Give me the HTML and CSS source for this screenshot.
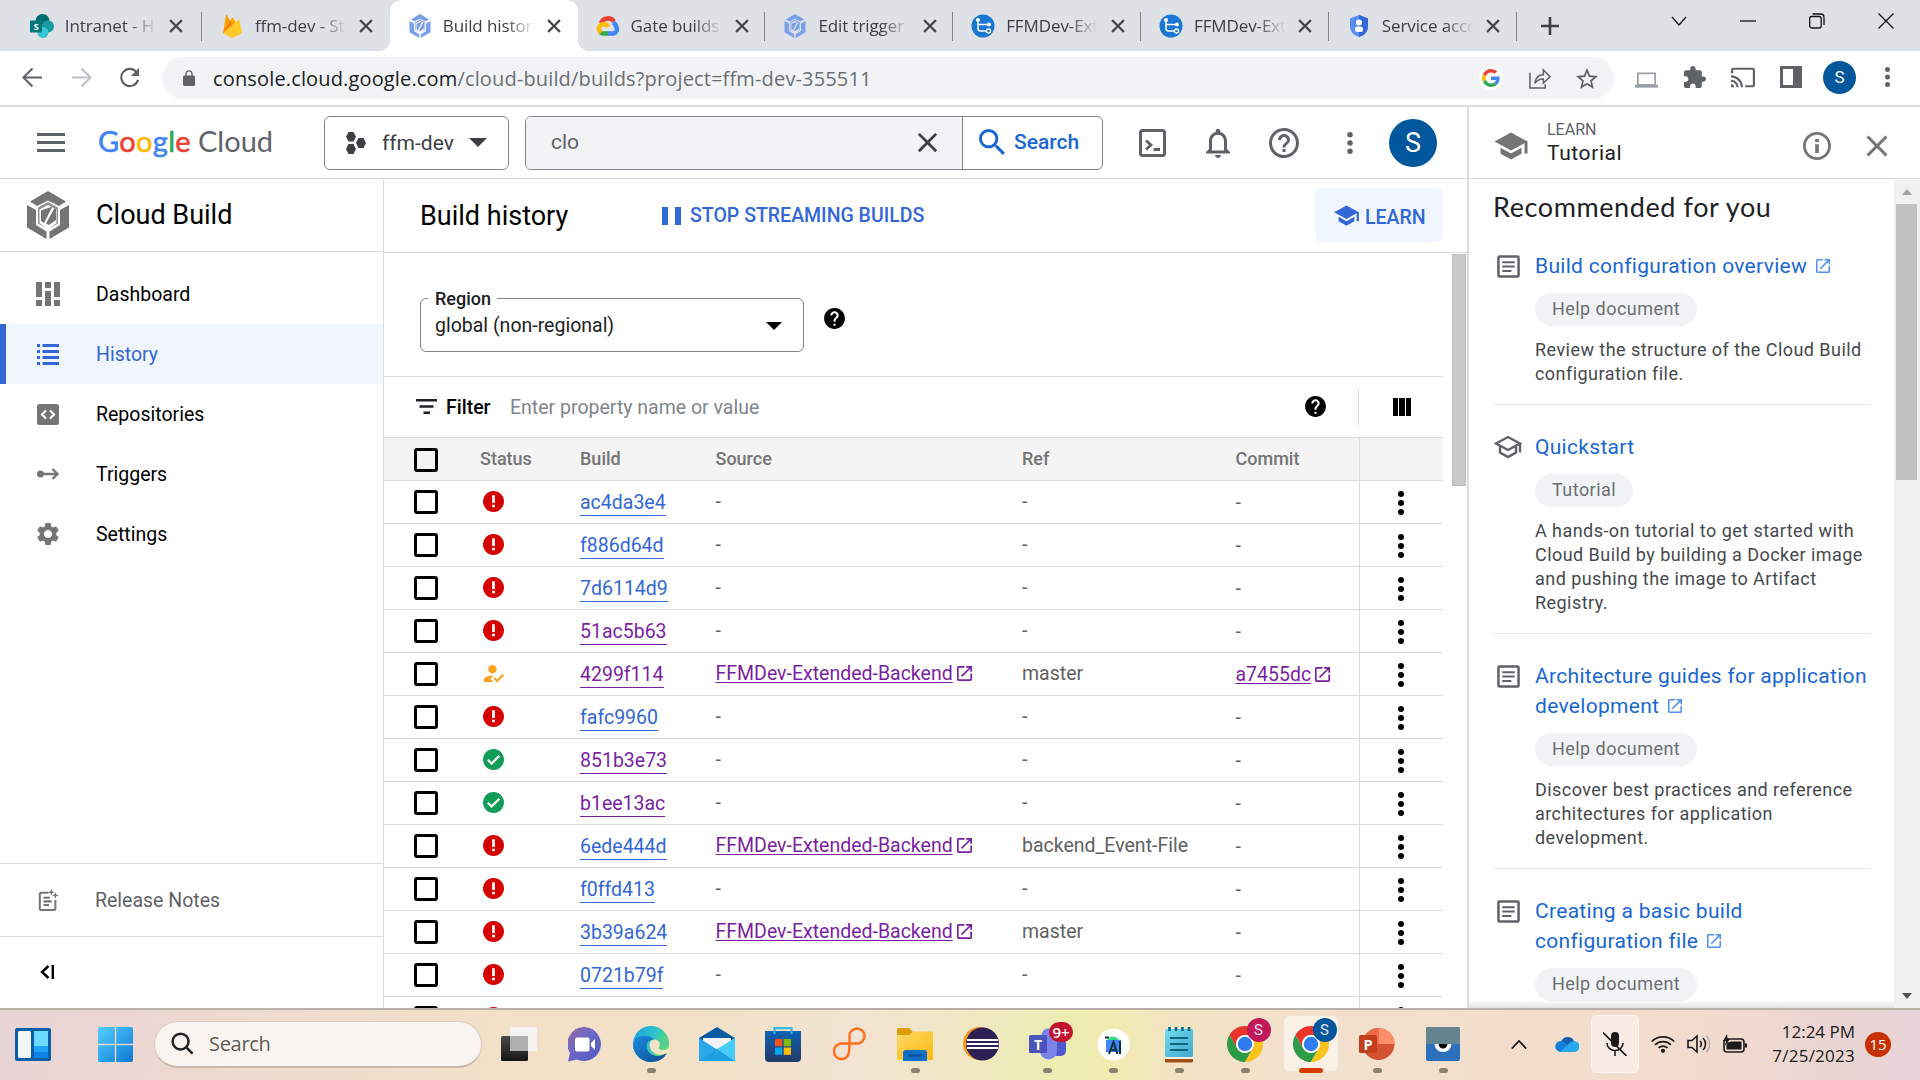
FILE: index.html
```html
<!DOCTYPE html>
<html lang="en">
<head>
<meta charset="utf-8">
<title>Build history – Cloud Build</title>
<link rel="stylesheet" href="styles.css">
</head>
<body>
<svg class="defs" width="0" height="0">
  <defs>
    <linearGradient id="edgeTop" x1="0" y1="0" x2="1" y2=".6"><stop offset="0" stop-color="#1b9de2"/><stop offset=".55" stop-color="#2fc4cf"/><stop offset="1" stop-color="#6be04e"/></linearGradient>
    <linearGradient id="edgeLow" x1="0" y1="0" x2="1" y2="1"><stop offset="0" stop-color="#1b8fe0"/><stop offset="1" stop-color="#0c4a94"/></linearGradient>
    <linearGradient id="win" x1="0" y1="0" x2="1" y2="1"><stop offset="0" stop-color="#55d0ff"/><stop offset="1" stop-color="#0a78d4"/></linearGradient>
    <linearGradient id="chat" x1="0" y1="0" x2="1" y2="1"><stop offset="0" stop-color="#9a6a9c"/><stop offset=".4" stop-color="#6f68c4"/><stop offset="1" stop-color="#5058c8"/></linearGradient>
    <linearGradient id="folder" x1="0" y1="0" x2="1" y2="1"><stop offset="0" stop-color="#ffd968"/><stop offset="1" stop-color="#fbb80f"/></linearGradient>
    <linearGradient id="store" x1="0" y1="0" x2="0" y2="1"><stop offset="0" stop-color="#0d62b5"/><stop offset="1" stop-color="#243a66"/></linearGradient>
    <linearGradient id="note" x1="0" y1="0" x2="1" y2="1"><stop offset="0" stop-color="#70daf2"/><stop offset="1" stop-color="#40a9cc"/></linearGradient>
    <linearGradient id="grey" x1="0" y1="0" x2="0" y2="1"><stop offset="0" stop-color="#4a4a4a"/><stop offset="1" stop-color="#161616"/></linearGradient>
  </defs>
  <symbol id="close" viewBox="0 0 24 24"><path d="M19 6.41L17.59 5 12 10.59 6.41 5 5 6.41 10.59 12 5 17.59 6.41 19 12 13.41 17.59 19 19 17.59 13.41 12z"/></symbol>
  <symbol id="help" viewBox="0 0 24 24"><path d="M12 2C6.48 2 2 6.48 2 12s4.48 10 10 10 10-4.48 10-10S17.52 2 12 2zm1 17h-2v-2h2v2zm2.07-7.75l-.9.92C13.45 12.9 13 13.5 13 15h-2v-.5c0-1.1.45-2.1 1.17-2.83l1.24-1.26c.37-.36.59-.86.59-1.41 0-1.1-.9-2-2-2s-2 .9-2 2H8c0-2.21 1.79-4 4-4s4 1.79 4 4c0 .88-.36 1.68-.93 2.25z"/></symbol>
  <symbol id="help-o" viewBox="0 0 24 24"><path d="M11 18h2v-2h-2v2zm1-16C6.48 2 2 6.48 2 12s4.48 10 10 10 10-4.48 10-10S17.52 2 12 2zm0 18c-4.41 0-8-3.59-8-8s3.59-8 8-8 8 3.59 8 8-3.59 8-8 8zm0-14c-2.21 0-4 1.79-4 4h2c0-1.1.9-2 2-2s2 .9 2 2c0 2-3 1.75-3 5h2c0-2.25 3-2.5 3-5 0-2.21-1.79-4-4-4z"/></symbol>
  <symbol id="error" viewBox="2 2 20 20"><path fill="#d50000" d="M12 2C6.48 2 2 6.48 2 12s4.48 10 10 10 10-4.48 10-10S17.52 2 12 2z"/><path fill="#fff" d="M10.7 6h2.6v7.4h-2.6zM10.7 15h2.6v2.4h-2.6z"/></symbol>
  <symbol id="ok" viewBox="2 2 20 20"><path fill="#0f9d58" d="M12 2C6.48 2 2 6.48 2 12s4.48 10 10 10 10-4.48 10-10S17.52 2 12 2z"/><path fill="none" stroke="#fff" stroke-width="2.2" d="M6.6 12.2l3.6 3.6 7.4-7.4"/></symbol>
  <symbol id="person" viewBox="2 2 20 20"><path fill="#f9a11b" d="M9 17l3-2.94c-.39-.04-.68-.06-1-.06-2.67 0-8 1.34-8 4v2h9l-3-3zm2-5c2.21 0 4-1.79 4-4s-1.79-4-4-4-4 1.790-4 4 1.790 4 4 4zm4.470 8.500L12 17l1.400-1.410 2.070 2.080 5.130-5.170 1.400 1.410z"/></symbol>
  <symbol id="launch" viewBox="3 3 18 18"><path d="M19 19H5V5h7V3H5c-1.110 0-2 .9-2 2v14c0 1.100.89 2 2 2h14c1.100 0 2-.9 2-2v-7h-2v7zM14 3v2h3.590l-9.830 9.830 1.410 1.410L19 6.410V10h2V3h-7z"/></symbol>
  <symbol id="school" viewBox="0 0 24 24"><path d="M5 13.180v4L12 21l7-3.820v-4L12 17l-7-3.820zM12 3L1 9l11 6 9-4.910V17h2V9L12 3z"/></symbol>
  <symbol id="dots" viewBox="0 0 6 24"><circle cx="3" cy="3" r="3"/><circle cx="3" cy="12" r="3"/><circle cx="3" cy="21" r="3"/></symbol>
  <symbol id="search" viewBox="3 3 17.500 17.500"><path d="M15.500 14h-.79l-.28-.27A6.471 6.471 0 0016 9.500 6.500 6.500 0 109.500 16c1.610 0 3.090-.59 4.230-1.570l.27.28v.79l5 4.990L20.490 19l-4.990-5zm-6 0C7.010 14 5 11.990 5 9.500S7.010 5 9.500 5 14 7.010 14 9.500 11.990 14 9.500 14z"/></symbol>
  <symbol id="article" viewBox="0 0 24 24"><rect x="1.500" y="1.500" width="21" height="21" rx="1" fill="none" stroke="#5f6368" stroke-width="2.600"/><path stroke="#5f6368" stroke-width="2" d="M5.500 7.500h13M5.500 12h13M5.500 16.700h9.500"/></symbol>
  <symbol id="cube" viewBox="0 0 42 48"><path d="M21 0l18 10.500-7 4.500-11-5.500L10 15l-7-4.500zM0 14l9 5v15l10.500 6.500V48L0 36.500zM42 14l-9 5v15l-10.500 6.500V48L42 36.500z"/><path opacity=".8" d="M21 11l10 5.500v16L22.500 37v-0l7-5V18.500L21 14l-8.500 4.500V32l7 5L11 32.500v-16z"/><path d="M14 19.500l11.500-4L17 32l-3-2zM27.500 17l1.500 1v11l-7 5-3-1.500z" class="cube-core"/></symbol>
  <symbol id="pipe" viewBox="0 0 24 24"><circle cx="12" cy="12" r="11.500" fill="#1976d2"/><path d="M7 5.500v9q0 2.500 2.500 2.500H17M7 10.500h10" fill="none" stroke="#fff" stroke-width="1.500"/><g fill="#fff"><circle cx="7" cy="6" r="2"/><circle cx="18" cy="10.500" r="2"/></g><circle cx="17.500" cy="17" r="2" fill="#1976d2" stroke="#fff" stroke-width="1.300"/></symbol>
  <symbol id="chrome" viewBox="2 2 44 44"><path fill="#e8342b" d="M24 13H43.050A22 22 0 0 0 4.950 13L14.500 29.500A11 11 0 0 1 24 13z"/><path fill="#2c9c48" d="M14.500 29.500L4.950 13A22 22 0 0 0 24 46L33.500 29.500A11 11 0 0 1 14.500 29.500z"/><path fill="#fcc31d" d="M33.500 29.500L24 46A22 22 0 0 0 43.050 13H24A11 11 0 0 1 33.500 29.500z"/><circle cx="24" cy="24" r="11" fill="#fff"/><circle cx="24" cy="24" r="8.800" fill="#2f7cf0"/></symbol>
</svg>

<div class="tabs">
  <div class="tab"><svg class="fav" viewBox="0 0 24 24"><circle cx="12.500" cy="7" r="7" fill="#036c70"/><circle cx="18" cy="12.500" r="6" fill="#1a9ba1"/><circle cx="13" cy="18.500" r="5.500" fill="#37c6d0"/><rect y="6.500" width="12" height="12" rx="1" fill="#03787c"/><text x="6" y="16" font-size="9.500" font-weight="700" text-anchor="middle" fill="#fff">S</text></svg><span class="tab-title">Intranet - H</span><svg class="tab-x"><use href="#close"/></svg></div>
  <div class="tab"><svg class="fav" viewBox="0 0 24 24"><path fill="#ffa000" d="M3 19L6 1q.5-1 1 0l3 6 2-3q.6-.7 1.200 0L21 19z"/><path fill="#f57c00" d="M3 19l7-12 3 5z"/><path fill="#ffca28" d="M3 19L18.500 5.500q.8-.5 1 .5L22 19l-8.500 4.700q-1 .4-2 0z"/></svg><span class="tab-title">ffm-dev - St</span><svg class="tab-x"><use href="#close"/></svg></div>
  <div class="tab active"><svg class="fav cube-blue"><use href="#cube"/></svg><span class="tab-title">Build history</span><svg class="tab-x"><use href="#close"/></svg></div>
  <div class="tab"><svg class="fav" viewBox="0 0 24 24"><g fill="none" stroke-width="4.500"><path stroke="#ea4335" d="M5 9A7.500 7.500 0 0 1 18 7.500"/><path stroke="#4285f4" d="M17 8.500c2 1 3 2 3.300 4.500a4.300 4.300 0 0 1-3 6.500H12"/><path stroke="#34a853" d="M12 19.500H7c-1 0-2-.3-3-1"/><path stroke="#fbbc05" d="M5 18.500a4.500 4.500 0 0 1 4-8c1.500.3 2.500 1 3 2.500"/></g></svg><span class="tab-title">Gate builds</span><svg class="tab-x"><use href="#close"/></svg></div>
  <div class="tab"><svg class="fav cube-blue"><use href="#cube"/></svg><span class="tab-title">Edit trigger</span><svg class="tab-x"><use href="#close"/></svg></div>
  <div class="tab"><svg class="fav"><use href="#pipe"/></svg><span class="tab-title">FFMDev-Ext</span><svg class="tab-x"><use href="#close"/></svg></div>
  <div class="tab"><svg class="fav"><use href="#pipe"/></svg><span class="tab-title">FFMDev-Ext</span><svg class="tab-x"><use href="#close"/></svg></div>
  <div class="tab"><svg class="fav" viewBox="0 0 24 24"><path fill="#5b8def" d="M12 1l9 3.500V12c0 6-4 9.500-9 11-5-1.500-9-5-9-11V4.500z"/><path fill="#3367d6" d="M12 1l9 3.500V12c0 6-4 9.500-9 11z"/><circle cx="12" cy="8.500" r="3" fill="#fff"/><rect x="8" y="12.500" width="8" height="5.500" rx="2.500" fill="#fff"/></svg><span class="tab-title">Service acco</span><svg class="tab-x"><use href="#close"/></svg></div>
  <svg class="tab-new" viewBox="0 0 18 18"><path stroke="#3c4043" stroke-width="2.600" d="M9 0v18M0 9h18"/></svg>
  <div class="win-controls">
    <svg viewBox="0 0 16 16"><path d="M1 4l7 8 7-8"/></svg>
    <svg viewBox="0 0 16 16"><path d="M0 8h16"/></svg>
    <svg viewBox="0 0 16 16"><rect x=".7" y="3.500" width="11.500" height="11.500" rx="2"/><path d="M3.500 1h8q3.500 0 3.500 3.500v7.500"/></svg>
    <svg viewBox="0 0 16 16"><path d="M.5.5l15 15M15.500.5l-15 15"/></svg>
  </div>
</div>

<div class="toolbar">
  <svg class="tb-back" viewBox="0 0 22 22"><path d="M21 11H2M11 1.500L1.500 11l9.500 9.500"/></svg>
  <svg class="tb-fwd" viewBox="0 0 22 22"><path d="M1 11h19M11 1.500l9.500 9.500-9.500 9.500"/></svg>
  <svg class="tb-reload" viewBox="0 0 22 22"><path d="M18.500 5.500A9 9 0 1 0 20 13.500" /><path class="tip" d="M21 1v8.500h-8.500z"/></svg>
  <div class="omnibox">
    <svg class="lock" viewBox="4 1 16 21"><path d="M18 8h-1V6c0-2.760-2.240-5-5-5S7 3.240 7 6v2H6c-1.100 0-2 .9-2 2v10c0 1.100.9 2 2 2h12c1.100 0 2-.9 2-2V10c0-1.100-.9-2-2-2zm-2.900 0H8.900V6c0-1.710 1.390-3.100 3.100-3.100s3.100 1.390 3.100 3.100v2z"/></svg>
    <div class="url"><b>console.cloud.google.com</b>/cloud-build/builds?project=ffm-dev-355511</div>
    <div class="g-badge"><svg width="18" height="18" viewBox="0 0 48 48"><path fill="#EA4335" d="M24 9.500c3.540 0 6.710 1.220 9.210 3.600l6.850-6.850C35.900 2.380 30.470 0 24 0 14.620 0 6.510 5.380 2.560 13.220l7.980 6.190C12.430 13.720 17.740 9.500 24 9.500z"/><path fill="#4285F4" d="M46.980 24.550c0-1.570-.15-3.090-.38-4.550H24v9.020h12.940c-.58 2.960-2.260 5.480-4.780 7.180l7.730 6c4.510-4.180 7.090-10.360 7.090-17.650z"/><path fill="#FBBC05" d="M10.530 28.590c-.48-1.450-.76-2.990-.76-4.590s.27-3.140.76-4.590l-7.980-6.190C.92 16.460 0 20.120 0 24c0 3.880.92 7.540 2.560 10.780l7.970-6.190z"/><path fill="#34A853" d="M24 48c6.480 0 11.930-2.130 15.890-5.810l-7.730-6c-2.150 1.450-4.920 2.300-8.160 2.300-6.260 0-11.570-4.220-13.470-9.910l-7.980 6.190C6.510 42.620 14.620 48 24 48z"/></svg></div>
    <svg class="share" viewBox="0 0 23 22"><path d="M1 5v16h16v-4M6 16c1-6 4-9 9-9V2l7 7-7 7v-4.500c-4 0-6.500 1-9 4.500z"/></svg>
    <svg class="star" viewBox="2 2 20 19"><path d="M22 9.240l-7.190-.62L12 2 9.190 8.630 2 9.240l5.460 4.730L5.820 21 12 17.270 18.180 21l-1.630-7.030L22 9.240zM12 15.400l-3.760 2.270 1-4.280-3.320-2.880 4.380-.38L12 6.100l1.710 4.040 4.380.38-3.320 2.880 1 4.280L12 15.400z"/></svg>
  </div>
  <svg class="tb-laptop" viewBox="0 0 24 16"><path fill="none" stroke="#9aa0a6" stroke-width="1.800" d="M3 1h18v12H3z"/><path fill="#9aa0a6" d="M0 13h24v3H0z"/></svg>
  <svg class="tb-puzzle" viewBox="2 1 21 21"><path fill="#5f6368" d="M20.500 11H19V7c0-1.100-.9-2-2-2h-4V3.500C13 2.120 11.880 1 10.500 1S8 2.120 8 3.500V5H4c-1.100 0-1.990.9-1.990 2v3.800H3.500c1.490 0 2.700 1.210 2.700 2.700s-1.210 2.700-2.700 2.700H2V20c0 1.100.9 2 2 2h3.800v-1.500c0-1.490 1.210-2.700 2.700-2.700 1.490 0 2.700 1.210 2.700 2.700V22H17c1.100 0 2-.9 2-2v-4h1.500c1.380 0 2.500-1.120 2.500-2.500S21.880 11 20.500 11z"/></svg>
  <svg class="tb-cast" viewBox="1 3 22 18"><path fill="#5f6368" d="M21 3H3c-1.100 0-2 .9-2 2v3h2V5h18v14h-7v2h7c1.100 0 2-.9 2-2V5c0-1.100-.9-2-2-2zM1 18v3h3c0-1.660-1.340-3-3-3zm0-4v2c2.760 0 5 2.240 5 5h2c0-3.870-3.130-7-7-7zm0-4v2c4.970 0 9 4.030 9 9h2c0-6.080-4.930-11-11-11z"/></svg>
  <svg class="tb-panel" viewBox="0 0 22 22"><path fill="#5f6368" fill-rule="evenodd" d="M0 0h22v22H0zM3 3v16h10V3z"/></svg>
  <div class="tb-avatar">S</div>
  <svg class="tb-more"><use href="#dots"/></svg>
</div>

<div class="page">
  <div class="console">
    <div class="topbar">
      <svg class="menu" viewBox="0 0 28 19"><path stroke="#5f6368" stroke-width="3" d="M0 1.500h28M0 9.500h28M0 17.500h28"/></svg>
      <div class="logo"><span class="goog"><i class="b">G</i><i class="r">o</i><i class="y">o</i><i class="b">g</i><i class="g">l</i><i class="r">e</i></span><span class="cloud">Cloud</span></div>
      <div class="project">
        <svg class="hexes" viewBox="0 0 20 22"><path d="M2.500 0h5L10 4.700 7.500 9.500h-5L0 4.700zM2.500 12h5l2.500 5-2.500 5h-5L0 17zM12.500 6h5l2.500 5-2.500 5h-5L10 11z"/></svg>
        <span>ffm-dev</span><i class="caret big"></i>
      </div>
      <div class="searchbox"><div class="query"><span>clo</span><svg><use href="#close"/></svg></div><div class="go"><svg><use href="#search"/></svg>Search</div></div>
      <svg class="ic-shell" viewBox="0 0 27 28"><rect x="1.500" y="1.500" width="24" height="25" rx="2" fill="none" stroke="#5f6368" stroke-width="3"/><path fill="none" stroke="#5f6368" stroke-width="2.800" d="M7 11.500l5 4.500-5 4.500M14.500 20.500h6.500"/></svg>
      <svg class="ic-bell" viewBox="0 0 24 24"><path d="M12 22c1.100 0 2-.9 2-2h-4c0 1.100.9 2 2 2zm6-6v-5c0-3.070-1.630-5.640-4.500-6.320V4c0-.83-.67-1.500-1.500-1.500s-1.500.67-1.500 1.500v.68C7.640 5.360 6 7.920 6 11v5l-2 2v1h16v-1l-2-2zm-2 1H8v-6c0-2.480 1.510-4.500 4-4.500s4 2.020 4 4.500v6z"/></svg>
      <svg class="ic-help"><use href="#help-o"/></svg>
      <svg class="ic-more"><use href="#dots"/></svg>
      <div class="avatar">S</div>
    </div>
    <div class="body">
      <nav class="nav">
        <div class="nav-head"><svg class="cube-grey"><use href="#cube"/></svg>Cloud Build</div>
        <div class="nav-items">
          <div class="nav-item"><svg viewBox="0 0 24 24"><path d="M0 0h6v15H0zM0 18h6v6H0zM9 0h6v6H9zM9 9h6v15H9zM18 0h6v15h-6zM18 18h6v6h-6z"/></svg>Dashboard</div>
          <div class="nav-item selected"><svg viewBox="0 0 24 24"><path d="M1 2h3v3H1zM6.500 2H23v3H6.500zM1 8h3v3H1zM6.500 8H23v3H6.500zM1 14h3v3H1zM6.500 14H23v3H6.500zM1 20h3v3H1zM6.500 20H23v3H6.500z"/></svg>History</div>
          <div class="nav-item"><svg viewBox="0 0 24 24"><rect x="1" y="2" width="22" height="21" rx="2.500"/><path fill="none" stroke="#fff" stroke-width="2.200" d="M10 8.500L6 12.500l4 4M14 8.500l4 4-4 4"/></svg>Repositories</div>
          <div class="nav-item"><svg viewBox="0 0 24 24"><circle cx="4.500" cy="12" r="3.500"/><path fill="none" stroke="#757575" stroke-width="2.400" d="M5 12h16M16.500 7l5 5-5 5"/></svg>Triggers</div>
          <div class="nav-item"><svg viewBox="1.500 1.500 21 21"><path d="M19.140 12.940c.04-.3.06-.61.06-.94 0-.32-.02-.64-.07-.94l2.030-1.580c.18-.14.23-.41.12-.61l-1.920-3.320c-.12-.22-.37-.29-.59-.22l-2.390.96c-.5-.38-1.030-.7-1.620-.94l-.36-2.540c-.04-.24-.24-.41-.48-.41h-3.840c-.24 0-.43.17-.47.41l-.36 2.540c-.59.24-1.130.57-1.620.94l-2.390-.96c-.22-.08-.47 0-.59.22L2.740 8.870c-.12.21-.08.47.12.61l2.030 1.580c-.05.3-.09.63-.09.94s.02.64.07.94l-2.030 1.580c-.18.14-.23.41-.12.61l1.920 3.320c.12.22.37.29.59.22l2.390-.96c.5.38 1.030.7 1.620.94l.36 2.540c.05.24.24.41.48.41h3.840c.24 0 .44-.17.47-.41l.36-2.540c.59-.24 1.130-.56 1.620-.94l2.390.96c.22.08.47 0 .59-.22l1.920-3.320c.12-.22.07-.47-.12-.61l-2.010-1.580zM12 15.600c-1.980 0-3.600-1.620-3.600-3.600s1.620-3.600 3.600-3.600 3.600 1.620 3.600 3.600-1.620 3.600-3.600 3.600z"/></svg>Settings</div>
        </div>
        <div class="notes"><svg viewBox="0 0 22 24"><path fill="none" stroke="#757575" stroke-width="2.200" d="M11 4H3q-1.500 0-1.500 1.500v16Q1.500 23 3 23h14q1.500 0 1.500-1.500V12M5.500 9.500h7M5.500 13.500h9M5.500 17.500h6"/><path fill="#757575" d="M14 0l1 2.500 2.500 1L15 4.500 14 7l-1-2.500-2.500-1 2.500-1zM18.500 3.500l1 2.500 2.500 1-2.500 1-1 2.500-1-2.500-2.500-1 2.500-1z"/></svg>Release Notes</div>
        <div class="collapse"><svg viewBox="0 0 14 14"><path fill="none" stroke="#000" stroke-width="2.400" d="M8.500 1L2 7l6.500 6M12.800 0v14"/></svg></div>
      </nav>
      <main class="main">
        <div class="main-head">
          <h1>Build history</h1>
          <div class="pause"></div><span class="stream">STOP STREAMING BUILDS</span>
          <div class="learn"><svg><use href="#school"/></svg>LEARN</div>
        </div>
        <div class="main-scroll">
          <div class="content">
            <div class="region-row">
              <fieldset class="region"><legend>Region</legend><span>global (non-regional)</span><i class="caret"></i></fieldset>
              <svg class="q"><use href="#help"/></svg>
            </div>
            <div class="filter-row">
              <svg class="funnel" viewBox="0 0 21 15"><path stroke="#202124" stroke-width="2.600" d="M0 1.300h21M3.500 7.500h14M7.500 13.700h6.500"/></svg>
              <b>Filter</b><span>Enter property name or value</span>
              <svg class="q"><use href="#help"/></svg>
              <div class="cols"><svg viewBox="0 0 18 18"><path d="M0 0h5v18H0zM6 0h6v18H6zM13 0h5v18h-5z"/></svg></div>
            </div>
            <div class="row head"><i class="cb"></i><span>Status</span><span>Build</span><span>Source</span><span>Ref</span><span>Commit</span><span class="act"></span></div>
            <div class="row"><i class="cb"></i><svg class="st"><use href="#error"/></svg><a class="id">ac4da3e4</a><span>-</span><span>-</span><span class="c">-</span><span class="act"><svg><use href="#dots"/></svg></span></div>
            <div class="row"><i class="cb"></i><svg class="st"><use href="#error"/></svg><a class="id">f886d64d</a><span>-</span><span>-</span><span class="c">-</span><span class="act"><svg><use href="#dots"/></svg></span></div>
            <div class="row"><i class="cb"></i><svg class="st"><use href="#error"/></svg><a class="id">7d6114d9</a><span>-</span><span>-</span><span class="c">-</span><span class="act"><svg><use href="#dots"/></svg></span></div>
            <div class="row"><i class="cb"></i><svg class="st"><use href="#error"/></svg><a class="id seen">51ac5b63</a><span>-</span><span>-</span><span class="c">-</span><span class="act"><svg><use href="#dots"/></svg></span></div>
            <div class="row"><i class="cb"></i><svg class="st"><use href="#person"/></svg><a class="id seen">4299f114</a><span class="ext"><a>FFMDev-Extended-Backend</a><svg><use href="#launch"/></svg></span><span>master</span><span class="ext c"><a>a7455dc</a><svg><use href="#launch"/></svg></span><span class="act"><svg><use href="#dots"/></svg></span></div>
            <div class="row"><i class="cb"></i><svg class="st"><use href="#error"/></svg><a class="id">fafc9960</a><span>-</span><span>-</span><span class="c">-</span><span class="act"><svg><use href="#dots"/></svg></span></div>
            <div class="row"><i class="cb"></i><svg class="st"><use href="#ok"/></svg><a class="id seen">851b3e73</a><span>-</span><span>-</span><span class="c">-</span><span class="act"><svg><use href="#dots"/></svg></span></div>
            <div class="row"><i class="cb"></i><svg class="st"><use href="#ok"/></svg><a class="id seen">b1ee13ac</a><span>-</span><span>-</span><span class="c">-</span><span class="act"><svg><use href="#dots"/></svg></span></div>
            <div class="row"><i class="cb"></i><svg class="st"><use href="#error"/></svg><a class="id">6ede444d</a><span class="ext"><a>FFMDev-Extended-Backend</a><svg><use href="#launch"/></svg></span><span>backend_Event-File</span><span class="c">-</span><span class="act"><svg><use href="#dots"/></svg></span></div>
            <div class="row"><i class="cb"></i><svg class="st"><use href="#error"/></svg><a class="id">f0ffd413</a><span>-</span><span>-</span><span class="c">-</span><span class="act"><svg><use href="#dots"/></svg></span></div>
            <div class="row"><i class="cb"></i><svg class="st"><use href="#error"/></svg><a class="id">3b39a624</a><span class="ext"><a>FFMDev-Extended-Backend</a><svg><use href="#launch"/></svg></span><span>master</span><span class="c">-</span><span class="act"><svg><use href="#dots"/></svg></span></div>
            <div class="row"><i class="cb"></i><svg class="st"><use href="#error"/></svg><a class="id">0721b79f</a><span>-</span><span>-</span><span class="c">-</span><span class="act"><svg><use href="#dots"/></svg></span></div>
            <div class="row"><i class="cb"></i><svg class="st"><use href="#error"/></svg><span></span><span></span><span></span><span></span><span class="act"><svg><use href="#dots"/></svg></span></div>
          </div>
          <div class="inner-bar"><i></i></div>
        </div>
      </main>
    </div>
  </div>

  <aside class="panel">
    <div class="panel-head">
      <svg class="hat"><use href="#school"/></svg>
      <div class="panel-title"><small>LEARN</small><span>Tutorial</span></div>
      <svg class="info" viewBox="2 2 20 20"><path d="M10.700 7h2.600v2.300h-2.600zm0 3.800h2.600V17h-2.600zM12 2C6.480 2 2 6.480 2 12s4.480 10 10 10 10-4.480 10-10S17.520 2 12 2zm0 18c-4.410 0-8-3.590-8-8s3.590-8 8-8 8 3.590 8 8-3.590 8-8 8z"/></svg>
      <svg class="px"><use href="#close"/></svg>
    </div>
    <div class="panel-body">
      <div class="panel-content">
        <h2>Recommended for you</h2>
        <div class="rec"><svg class="kind"><use href="#article"/></svg><div>
          <div class="rec-title">Build configuration overview <svg><use href="#launch"/></svg></div>
          <span class="chip">Help document</span><p>Review the structure of the Cloud Build<br>configuration file.</p></div></div>
        <div class="rec"><svg class="kind hat2" viewBox="0 0 28 24"><path fill="none" stroke="#5f6368" stroke-width="2.400" d="M2 8.500L14 2l12 6.500-12 6.500zM6 11.500v6l8 4.500 8-4.500v-6M26 8v9.500"/></svg><div>
          <div class="rec-title">Quickstart</div>
          <span class="chip">Tutorial</span><p>A hands-on tutorial to get started with<br>Cloud Build by building a Docker image<br>and pushing the image to Artifact<br>Registry.</p></div></div>
        <div class="rec"><svg class="kind"><use href="#article"/></svg><div>
          <div class="rec-title">Architecture guides for application<br>development <svg><use href="#launch"/></svg></div>
          <span class="chip">Help document</span><p>Discover best practices and reference<br>architectures for application<br>development.</p></div></div>
        <div class="rec"><svg class="kind"><use href="#article"/></svg><div>
          <div class="rec-title">Creating a basic build<br>configuration file <svg><use href="#launch"/></svg></div>
          <span class="chip">Help document</span></div></div>
        <div class="fade"></div>
      </div>
      <div class="panel-bar"><i class="up"></i><i class="thumb"></i><i class="down"></i></div>
    </div>
  </aside>
</div>

<div class="taskbar">
  <svg class="widgets" viewBox="0 0 36 33"><rect width="36" height="33" rx="2" fill="#0a5ea8"/><rect x="3" y="3" width="13" height="27" rx="1.500" fill="#f4f6f8"/><path fill="#6ad9ff" d="M19 3h14v15H19z"/><path fill="#1fa3f5" d="M19 18h14v6H19z"/><path fill="#0a84e8" d="M19 24h14v6H19z"/></svg>
  <svg class="start" viewBox="0 0 35 35"><path fill="url(#win)" d="M2 0h14.800v16.800H0V2q0-2 2-2zM18.200 0H33q2 0 2 2v14.800H18.200zM0 18.200h16.800V35H2q-2 0-2-2zM18.200 18.200H35V33q0 2-2 2H18.200z"/></svg>
  <div class="tsearch"><svg viewBox="0 0 24 24"><circle cx="10" cy="10" r="8.300"/><path d="M16 16l6.500 6.500"/></svg>Search</div>
  <div class="apps">
    <div class="app"><svg width="36" height="36" viewBox="0 0 36 36"><rect y="10" width="27" height="25" rx="1.500" fill="url(#grey)"/><rect x="9" y="1" width="27" height="24" rx="1.500" fill="#f4f4f4" fill-opacity=".93"/><path fill="#b0b0b0" d="M9 10h18v15H10.500Q9 25 9 23.500z"/></svg></div>
    <div class="app"><svg width="34" height="35" viewBox="0 0 34 35"><path fill="url(#chat)" d="M17 0a17 17 0 1 1-8 32.500L0 34.500 2 26A17 17 0 0 1 17 0z"/><rect x="7" y="10.500" width="14.500" height="14" rx="2" fill="#fff"/><path fill="#fff" d="M23 16l4-4v11l-4-4z"/></svg></div>
    <div class="app on"><svg width="36" height="36" viewBox="0 0 36 36"><circle cx="18" cy="18" r="18" fill="url(#edgeTop)"/><path fill="url(#edgeLow)" d="M0 18C1 9 15 7 22 14c-8-2-11 6-6 12s13 4 18 1C31 33 25 36 18 36 8 36 0 28 0 18z"/><path fill="#f2e2c8" d="M18 15c3-3 9-1 9 4-1 2-2 3-1 4 3 2 7 1 10-1-.5 2-1 4-2 5-6 3-13 2-16-3-2-4-2-7 0-9z"/><path fill="#4fd08c" d="M26 22c4 3 9 0 10-4a18 18 0 0 0-2-8l-9 3c3 3 3 6 1 9z"/></svg></div>
    <div class="app"><svg width="36" height="34" viewBox="0 0 36 34"><path fill="#0c59a4" d="M0 11L18 0l18 11v6H0z"/><path fill="#f1f4f8" d="M4 11h28v10H4z"/><path fill="#2aa9ea" d="M0 11l36 23H0z"/><path fill="#44cdf8" d="M36 11v23L18 22z"/><path fill="#1f9fe4" d="M0 34h36L18 22z"/></svg></div>
    <div class="app"><svg width="36" height="36" viewBox="0 0 36 36"><path fill="none" stroke="#35b8f0" stroke-width="2.200" d="M9.500 8V2.200h17V8"/><path fill="url(#store)" d="M0 5h36v27q0 4-4 4H4q-4 0-4-4z"/><path fill="none" stroke="#35b8f0" stroke-width="2" d="M9.500 8V5M26.500 8V5"/><path fill="#f25022" d="M10 13h7.300v7.300H10z"/><path fill="#7fba00" d="M18.700 13H26v7.300h-7.300z"/><path fill="#00a4ef" d="M10 21.500h7.300v7.300H10z"/><path fill="#ffb900" d="M18.700 21.500H26v7.300h-7.300z"/></svg></div>
    <div class="app"><svg width="34" height="34" viewBox="0 0 34 34"><path fill="none" stroke="#ff6d1f" stroke-width="2.400" d="M17.500 16.500V9a7.500 7.500 0 1 1 7.500 7.500H9.500A7.700 7.700 0 0 0 2 24.500a7.500 7.500 0 0 0 15 0z"/></svg></div>
    <div class="app on"><svg width="36" height="33" viewBox="0 0 36 33"><path fill="#dd9e0a" d="M1 0h11l4 4-3 4H0V1z"/><path fill="url(#folder)" d="M0 7h12l4-3.500h18q2 0 2 2V32H0z"/><path fill="#0f6fc5" d="M6 33V25q0-3 3-3h18q3 0 3 3v8z"/><path stroke="#0a4f94" stroke-width="2" d="M11 27.500h14"/></svg></div>
    <div class="app"><svg width="36" height="34" viewBox="0 0 36 34"><circle cx="16.500" cy="16.500" r="16.500" fill="#f7941e"/><circle cx="19.500" cy="17" r="16.500" fill="#2c2255"/><path fill="#fff" d="M4 12h31v2H4zM3.500 16h32v2H3.500zM4 20h31v2H4z"/></svg></div>
    <div class="app on"><svg class="teams" width="42" height="40" viewBox="0 0 42 40"><circle cx="20" cy="11" r="6.500" fill="#7b83eb"/><rect x="24" y="14" width="14" height="18" rx="5" fill="#5059c9"/><path fill="#7b83eb" d="M12 15h17v12a8.500 8.500 0 0 1-17 0z"/><rect x="1" y="11" width="18" height="18" rx="1.500" fill="#4b53bc"/><text x="10" y="25.500" font-size="14" font-weight="700" text-anchor="middle" fill="#fff">T</text></svg><em class="count">9+</em></div>
    <div class="app on"><svg width="33" height="33" viewBox="0 0 33 33"><circle cx="16.500" cy="16.500" r="16" fill="#fff"/><path fill="#3ddc84" d="M10 12a7 7 0 0 1 12 0z"/><path fill="#4285f4" d="M9 12h15v12H9z"/><path fill="none" stroke="#073042" stroke-width="2" d="M12 26l4.500-12 4 12M14 22h5M23 13v13M8 9.500h4"/></svg></div>
    <div class="app on"><svg width="28" height="37" viewBox="0 0 28 37"><path fill="#a54f13" d="M0 32h28v3q0 1.500-1.500 1.500h-25Q0 36.500 0 35z"/><path fill="#f3efe9" d="M0 29h28v4H0z"/><rect y="3" width="28" height="28" rx="1.500" fill="url(#note)"/><path stroke="#0d6680" stroke-width="2" d="M5 12h18M5 18h18M5 24h18"/><path stroke="#0d6680" stroke-width="2.600" d="M4.500 1v4M11 1v4M17.500 1v4M24 1v4"/></svg></div>
    <div class="app on"><svg width="36" height="36"><use href="#chrome"/></svg><em class="who pink">S</em></div>
    <div class="app on current"><svg width="36" height="36"><use href="#chrome"/></svg><em class="who blue">S</em></div>
    <div class="app on"><svg width="36" height="34" viewBox="0 0 36 34"><circle cx="19.500" cy="17" r="16" fill="#d35230"/><path fill="#ff8f6b" d="M19.500 1a16 16 0 0 1 16 16h-16z"/><path fill="#ed6c47" d="M19.500 1a16 16 0 0 0-16 16h16z"/><rect y="8" width="18" height="18" rx="1.500" fill="#c43e1c"/><text x="9" y="22.500" font-size="14.500" font-weight="700" text-anchor="middle" fill="#fff">P</text></svg></div>
    <div class="app on"><svg width="34" height="34" viewBox="0 0 34 34"><rect width="34" height="34" rx="2" fill="#2b70b8"/><path fill="#648490" d="M2 0h30q2 0 2 2v15H0V2q0-2 2-2z"/><path fill="#fff" d="M8.500 17h17a8.500 8 0 0 1-17 0z"/><path fill="#000" d="M12.500 17h9a4.500 4.500 0 0 1-9 0z"/></svg></div>
  </div>
  <svg class="t-up" viewBox="0 0 16 9"><path fill="none" stroke="#1b1b1b" stroke-width="1.800" d="M.8 8.500L8 1l7.200 7.500"/></svg>
  <svg class="t-cloud" viewBox="0 0 24 16"><path fill="#0f5fb4" d="M6 6a7 7 0 0 1 13-1l-7 5z"/><path fill="#1481d8" d="M5.500 16A5.500 5.500 0 1 1 8 5.500l10 7z"/><path fill="#28a8ea" d="M5 16l9-8.500q2-2 5-2.500a5.500 5.500 0 0 1 0 11z"/></svg>
  <div class="t-mic"><svg width="24" height="24" viewBox="0 0 24 24"><rect x="8" y="0" width="8" height="15" rx="4" fill="#1b1b1b"/><path fill="none" stroke="#1b1b1b" stroke-width="1.600" d="M4 11a8 7.500 0 0 0 16 0M12 18.500V24M0 .5L23.500 24"/></svg></div>
  <svg class="t-wifi" viewBox="0 0 24 18"><g fill="none" stroke="#1b1b1b" stroke-width="1.700"><path d="M.7 6.500a16 16 0 0 1 22.600 0M4 9.800a11.500 11.500 0 0 1 16 0M7.500 13a6.500 6.500 0 0 1 9 0"/></g><circle cx="12" cy="15.800" r="2.100" fill="#1b1b1b"/></svg>
  <svg class="t-vol" viewBox="0 0 24 20"><path fill="none" stroke="#1b1b1b" stroke-width="1.600" d="M1 6.500h4l5-4.500v16l-5-4.500H1zM13 7a4 4 0 0 1 0 6M16 4a8.500 8.500 0 0 1 0 12"/><path fill="none" stroke="#b8a99c" stroke-width="1.400" d="M19 1.500a12 12 0 0 1 0 17"/></svg>
  <svg class="t-bat" viewBox="0 0 24 20"><rect x="1" y="5" width="20" height="13" rx="3" fill="none" stroke="#1b1b1b" stroke-width="1.600"/><path fill="#1b1b1b" d="M3.500 15.500V9L8 7.500H18.500v8zM22 9.500h2v4h-2zM4 0l-4 7h3l-1 5 5-7H4.500z"/></svg>
  <div class="clock">12:24 PM<br><span>7/25/2023</span></div>
  <div class="notif">15</div>
</div>
</body>
</html>
```
FILE: styles.css
```css
* { box-sizing: border-box; }
body {
  margin: 0;
  width: 1920px;
  height: 1080px;
  overflow: hidden;
  display: flex;
  flex-direction: column;
  background: #fff;
  font-family: Roboto, "Liberation Sans", sans-serif;
  font-size: 19.5px;
  color: #202124;
}
svg { display: block; flex: none; }
i, em { font-style: normal; }
.defs { position: absolute; }

/* Browser tabs */
.tabs {
  height: 51px;
  flex: none;
  display: flex;
  align-items: flex-start;
  padding-left: 11.800px;
  background: #dee1e6;
  font-family: "Open Sans", "Noto Sans", sans-serif;
  font-size: 17px;
  letter-spacing: -.1px;
  color: #3c4043;
}
.tab {
  width: 187.800px;
  height: 51px;
  flex: none;
  display: flex;
  align-items: center;
  padding-left: 18px;
  position: relative;
}
.tab:first-child { width: 190.200px; }
.tab::after {
  content: "";
  position: absolute;
  right: 0;
  top: 12px;
  width: 1px;
  height: 29px;
  background: #80868b;
}
.tab:nth-child(2)::after, .tab.active::after { display: none; }
.tab.active { background: #fff; border-radius: 12px 12px 0 0; }
.tab.active::before {
  content: "";
  position: absolute;
  left: -12px;
  right: -12px;
  bottom: 0;
  height: 12px;
  background:
    radial-gradient(circle at 0 0, transparent 12px, #fff 12.500px) left / 12px 12px no-repeat,
    radial-gradient(circle at 100% 0, transparent 12px, #fff 12.500px) right / 12px 12px no-repeat;
}
.fav { width: 24px; height: 24px; }
.cube-blue { fill: #7b9fe8; }
.cube-blue .cube-core { fill: #3367d6; }
.tab-title {
  width: 92px;
  margin-left: 11px;
  overflow: hidden;
  white-space: nowrap;
  -webkit-mask-image: linear-gradient(90deg, #000 68%, transparent 100%);
  mask-image: linear-gradient(90deg, #000 68%, transparent 100%);
}
.tab-x { width: 22px; height: 22px; margin-left: 8.500px; fill: #3c4043; stroke: #3c4043; stroke-width: .5; }
.tab-new { width: 18px; height: 18px; margin: 17px 0 0 24px; }
.win-controls { display: flex; gap: 53px; margin: 13px 0 0 112.500px; }
.win-controls svg { width: 16px; height: 16px; fill: none; stroke: #111; stroke-width: 1.300; }

/* Browser toolbar */
.toolbar {
  height: 56px;
  flex: none;
  display: flex;
  align-items: center;
  padding-bottom: 2px;
  border-bottom: 2px solid #dadce0;
}
.tb-back, .tb-fwd, .tb-reload { width: 21px; height: 21px; fill: none; stroke: #5f6368; stroke-width: 2.200; }
.tb-back { margin-left: 22px; }
.tb-fwd { margin-left: 28px; stroke: #bdc1c6; }
.tb-reload { margin-left: 27px; }
.tb-reload .tip { fill: #5f6368; stroke: none; }
.omnibox {
  width: 1452px;
  height: 42px;
  margin-left: 22px;
  margin-top: 2px;
  border-radius: 21px;
  background: #f1f3f4;
  display: flex;
  align-items: center;
  padding-left: 21px;
}
.lock { width: 12px; height: 16px; fill: #5f6368; }
.url {
  width: 1266px;
  margin-left: 18px;
  font-family: "Open Sans", "Noto Sans", sans-serif;
  font-size: 20px;
  letter-spacing: .15px;
  color: #6b6f74;
}
.url b { font-weight: 400; color: #202124; }
.g-badge { width: 24px; height: 24px; border-radius: 50%; background: #fff; display: grid; place-items: center; }
.share { width: 22px; height: 21px; margin-left: 26px; fill: none; stroke: #5f6368; stroke-width: 1.600; }
.star { width: 22px; height: 21px; margin-left: 25px; fill: #5f6368; }
.tb-laptop { width: 23px; height: 16px; margin: 6px 0 0 21px; }
.tb-puzzle { width: 22px; height: 22px; margin-left: 26px; }
.tb-cast { width: 24px; height: 21px; margin-left: 25px; }
.tb-panel { width: 22px; height: 22px; margin-left: 25px; }
.tb-avatar { width: 33px; height: 33px; margin-left: 21px; border-radius: 50%; background: #01579b; color: #fff; font-size: 17px; display: grid; place-items: center; }
.tb-more { width: 5px; height: 20px; margin-left: 29px; fill: #5f6368; }

/* Page */
.page { height: 901px; flex: none; display: flex; overflow: hidden; }
.console { width: 1467px; flex: none; display: flex; flex-direction: column; }
.topbar { height: 72px; flex: none; display: flex; align-items: center; border-bottom: 1px solid #dadce0; }
.menu { width: 28px; height: 19px; margin-left: 37px; }
.logo { width: 226px; height: 40px; margin: -3px 0 0 33px; display: flex; align-items: center; font-family: Lato, "Open Sans", sans-serif; font-size: 29px; line-height: 40px; }
.goog { width: 100px; letter-spacing: .3px; -webkit-text-stroke: .6px; }
.cloud { color: #5f6368; }
.b { color: #4285f4; } .r { color: #ea4335; } .y { color: #fbbc04; } .g { color: #34a853; }
.project { width: 185px; height: 54px; border: 1px solid #80868b; border-radius: 6px; display: flex; align-items: center; padding-left: 21px; font-size: 21px; color: #3c4043; }
.hexes { width: 20px; height: 22px; fill: #3c4043; }
.project span { width: 71px; flex: none; margin-left: 16px; white-space: nowrap; }
.caret { width: 0; height: 0; border: 8px solid transparent; border-top-color: #000; border-bottom: 0; }
.caret.big { border-width: 9px; border-bottom: 0; border-top-color: #3c4043; margin-left: 16px; }
.searchbox { width: 578px; height: 54px; margin-left: 16px; border: 1px solid #80868b; border-radius: 6px; display: flex; overflow: hidden; }
.query { flex: 1; display: flex; align-items: center; justify-content: space-between; padding: 0 18px 1px 25px; background: #f1f3f4; color: #5f6368; font-size: 21px; }
.query svg { width: 33px; height: 33px; fill: #3c4043; }
.go { width: 140px; border-left: 1px solid #80868b; display: flex; align-items: center; padding: 0 0 1px 16px; gap: 9px; color: #1967d2; font-size: 21px; font-weight: 500; }
.go svg { width: 26px; height: 26px; fill: #1967d2; }
.ic-shell { width: 27px; height: 28px; margin-left: 36px; }
.ic-bell { width: 36px; height: 36px; margin-left: 34px; fill: #5f6368; }
.ic-help { width: 36px; height: 36px; margin-left: 30px; fill: #5f6368; }
.ic-more { width: 6px; height: 22px; margin-left: 45px; fill: #5f6368; }
.avatar { width: 48px; height: 48px; margin-left: 36px; border-radius: 50%; background: #01579b; color: #fff; font-size: 27px; display: grid; place-items: center; }

.body { flex: 1; min-height: 0; display: flex; }
.nav { width: 384px; flex: none; border-right: 1px solid #dadce0; display: flex; flex-direction: column; color: #000; }
.nav-head { height: 73px; flex: none; display: flex; align-items: center; border-bottom: 1px solid #dadce0; font-size: 27px; }
.cube-grey { width: 42px; height: 48px; margin: 0 27px 0 27px; fill: #757575; }
.cube-grey .cube-core { fill: #424242; }
.nav-items { flex: 1; padding-top: 12px; }
.nav-item { height: 60px; display: flex; align-items: center; padding-left: 36px; }
.nav-item svg { width: 24px; height: 24px; margin-right: 36px; fill: #757575; }
.nav-item.selected { background: #f0f5fe; border-left: 6px solid #3367d6; padding-left: 30px; color: #3367d6; }
.nav-item.selected svg { fill: #3367d6; }
.notes { height: 74px; flex: none; display: flex; align-items: center; border-top: 1px solid #dadce0; border-bottom: 1px solid #dadce0; padding-left: 38px; color: #5f6368; }
.notes svg { width: 21px; height: 22px; margin-right: 36px; }
.collapse { height: 71px; flex: none; padding: 28px 0 0 40px; }
.collapse svg { width: 14px; height: 14px; }

.main { width: 1083px; display: flex; flex-direction: column; }
.main-head { height: 74px; flex: none; display: flex; align-items: center; border-bottom: 1px solid #dadce0; }
h1 { width: 241px; margin: 0 0 0 36px; font-size: 27px; font-weight: 400; color: #000; }
.pause { width: 19px; height: 18px; margin-left: 1px; border: solid #3367d6; border-width: 0 6.500px; }
.stream { width: 625px; margin-left: 9px; font-weight: 500; color: #3367d6; }
.learn { width: 128px; height: 54px; margin-top: -2px; border-radius: 6px; background: #f0f5fe; color: #3367d6; font-weight: 500; display: flex; align-items: center; padding: 5px 0 0 18px; gap: 5px; }
.learn svg { width: 27px; height: 27px; fill: #3367d6; margin-top: -4px; }

.main-scroll { flex: 1; min-height: 0; display: flex; overflow: hidden; }
.content { width: 1059px; flex: none; }
.region-row { height: 124px; display: flex; border-bottom: 1px solid #dadce0; padding: 33px 0 0 36px; }
.region { width: 384px; height: 66px; margin: 0; padding: 0 21px 10px 14px; border: 1px solid #80868b; border-radius: 6px; display: flex; align-items: center; justify-content: space-between; }
.region legend { margin-left: -7px; padding: 2px 6px 0 7px; font-size: 18px; font-weight: 500; line-height: 22px; color: #202124; }
.q { width: 25px; height: 25px; fill: #000; }
.region-row .q { margin: 20px 0 0 18px; }
.filter-row { height: 61px; display: flex; align-items: center; padding-left: 32px; border-bottom: 1px solid #dadce0; }
.funnel { width: 21px; height: 15px; margin-bottom: 1px; }
.filter-row .q { margin-bottom: 2px; }
.filter-row b { width: 64px; margin-left: 9px; font-weight: 500; color: #000; }
.filter-row span { width: 793px; color: #80868b; }
.cols { width: 85px; height: 36px; margin-left: 30px; border-left: 1px solid #e0e0e0; display: grid; align-items: center; padding-left: 34px; }
.cols svg { width: 18px; height: 18px; }

.row {
  height: 43px;
  display: grid;
  grid-template-columns: 66px 100px 135.500px 306.500px 213.500px 123.500px 84px;
  align-items: center;
  padding-left: 30px;
  border-bottom: 1px solid #dadce0;
  color: #616161;
}
.row.head { background: #f4f4f4; font-size: 18px; font-weight: 500; color: #757575; }
.row.head span { margin-top: -2px; }
.row.head .act { margin: 0; }
.cb { width: 24px; height: 24px; margin-bottom: 2px; border: 3px solid #000; border-radius: 3px; }
.row.head .cb { margin: 1px 0 0; }
.st { width: 21px; height: 21px; margin: 0 0 2px 3px; }
.row > span { margin-top: -2px; }
.row > span.c { margin-top: 0; }
.id { justify-self: start; margin-top: 2px; border-bottom: 1px solid; line-height: 22px; height: 24px; color: #3367d6; }
.id.seen { color: #7b1fa2; }
.ext { display: flex; align-items: center; gap: 4px; color: #7b1fa2; }
.ext a { text-decoration: underline; text-decoration-thickness: 1px; text-underline-offset: 2px; }
.ext svg { width: 15px; height: 15px; fill: #7b1fa2; }
.row > .act { height: 43px; margin: 0; border-left: 1px solid #dadce0; padding: 9px 0 0 38px; }
.act svg { width: 6px; height: 24px; fill: #000; margin-top: 1px; }
.inner-bar { width: 14px; margin-left: 9px; }
.inner-bar i { display: block; height: 232px; margin-top: 1px; background: #c9c9c9; border: 1px solid #bdbdbd; }

/* Learn panel */
.panel { width: 453px; flex: none; border-left: 2px solid #dadce0; display: flex; flex-direction: column; }
.panel-head { height: 72px; flex: none; border-bottom: 1px solid #dadce0; display: flex; align-items: center; padding: 6px 0 0 24px; }
.hat { width: 36px; height: 36px; fill: #757575; }
.panel-title { width: 256px; margin: -8px 0 0 18px; display: flex; flex-direction: column; }
.panel-title small { font-size: 16px; line-height: 22px; color: #5f6368; }
.panel-title span { font-size: 21px; line-height: 24px; letter-spacing: .6px; }
.info { width: 28px; height: 28px; fill: #757575; }
.px { width: 36px; height: 36px; margin-left: 28px; fill: #757575; }
.panel-body { flex: 1; min-height: 0; display: flex; }
.panel-content { width: 425px; padding: 0 23px 0 24px; position: relative; overflow: hidden; }
h2 { margin: 0; height: 55px; padding-top: 7px; font: 400 27px/42px Lato, "Open Sans", sans-serif; letter-spacing: .6px; white-space: nowrap; color: #202124; }
.rec { display: flex; padding: 17px 0 18px; white-space: nowrap; }
.rec + .rec { padding-top: 27px; border-top: 1px solid #e8eaed; }
.kind { width: 23px; height: 23px; margin: 4px 15px 0 4px; }
.kind.hat2 { width: 28px; height: 24px; margin: 3px 13px 0 1px; }
.rec-title { font-size: 21px; line-height: 30px; letter-spacing: .3px; color: #1967d2; margin-bottom: 12px; }
.rec-title svg { display: inline-block; width: 14px; height: 14px; margin-left: 3px; fill: #5390f5; }
.chip { display: block; width: max-content; height: 33px; border-radius: 17px; padding: 0 17px; background: #f1f3f4; color: #6b6f74; font-size: 18px; line-height: 32px; letter-spacing: .45px; }
.rec p { margin: 12px 0 0; font-size: 18px; line-height: 24px; letter-spacing: .45px; color: #45494d; }
.fade { position: absolute; left: 0; right: 0; bottom: 0; height: 8px; background: linear-gradient(transparent, rgba(120, 120, 120, .22)); }
.panel-bar { width: 26px; background: #f1f1f1; display: flex; flex-direction: column; align-items: center; padding: 10px 1px 9px 0; }
.panel-bar .up { border: 5.500px solid transparent; border-top: 0; border-bottom: 6px solid #a3a3a3; }
.panel-bar .thumb { width: 21px; height: 276px; margin-top: 9px; background: #c1c1c1; }
.panel-bar .down { margin-top: auto; border: 5.500px solid transparent; border-bottom: 0; border-top: 6px solid #505050; }

/* Taskbar */
.taskbar {
  height: 72px;
  flex: none;
  display: flex;
  align-items: center;
  border-top: 2px solid #bcafa5;
  padding: 0 0 2px 15px;
  background: linear-gradient(95deg, #e9d5d6 0, #ebd6d3 110px, #efdcce 300px, #f2e0c8 520px, #f2e1c8 700px, #f2e3d3 860px, #f0e8c0 980px, #ecedb2 1060px, #f2ebb0 1110px, #f3e4c4 1170px, #f3e0cd 1300px, #f2dcce 1700px, #ebd5d3 1820px, #e7d3d7 1920px);
  font-family: "Open Sans", "Noto Sans", sans-serif;
}
.widgets { width: 36px; height: 33px; }
.start { width: 35px; height: 35px; margin-left: 47px; }
.tsearch { width: 328px; height: 47px; margin-left: 21px; border: 1px solid #dccbbf; border-bottom: 2px solid #c9b8ab; border-radius: 24px; background: #faf4f0; display: flex; align-items: center; padding-left: 16px; gap: 15px; font-size: 20px; letter-spacing: -.3px; color: #5d5a58; }
.tsearch svg { width: 23px; height: 23px; fill: none; stroke: #222; stroke-width: 2.600; }
.apps { display: flex; margin-left: 4px; }
.app { width: 66px; height: 58px; display: grid; place-items: center; position: relative; }
.app.current::before { content: ""; position: absolute; inset: 0 5px 1px; border-radius: 6px; background: #fbf1e7; border: 1px solid #f0e2d6; }
.app svg { position: relative; }
.app .teams { margin-left: 4px; }
.app.on::after { content: ""; position: absolute; left: 28.500px; bottom: 0; width: 9px; height: 5px; border-radius: 3px; background: #8a8172; }
.app.current::after { left: 21px; width: 24px; background: #d83b01; }
.who { position: absolute; left: 34.500px; top: 3px; width: 24px; height: 24px; border-radius: 50%; font: 15px/24px Roboto, sans-serif; text-align: center; color: #e8e0ea; }
.pink { background: #c2185b; }
.blue { background: #01579b; }
.count { position: absolute; left: 35px; top: 7px; width: 24px; height: 20px; border-radius: 10px; background: #c4122f; color: #fff; font-weight: 600; font-size: 15px; line-height: 20px; text-align: center; }
.t-up { width: 16px; height: 9px; margin-left: 35px; }
.t-cloud { width: 24px; height: 16px; margin-left: 28px; }
.t-mic { width: 48px; height: 58px; margin-left: 12px; border-radius: 6px; background: #f8ece4; border: 1px solid #fff5ee; display: grid; place-items: center; }
.t-wifi { width: 24px; height: 18px; margin-left: 12px; }
.t-vol { width: 24px; height: 20px; margin-left: 12px; }
.t-bat { width: 24px; height: 20px; margin-left: 12px; }
.clock { width: 96px; margin-left: 12px; font-size: 17px; line-height: 24px; text-align: right; color: #1b1b1b; }
.clock span { letter-spacing: .25px; }
.notif { width: 26px; height: 25px; margin-left: 10px; border-radius: 13px; background: #c73000; color: #fff; font-size: 15px; line-height: 24px; text-align: center; }
```
